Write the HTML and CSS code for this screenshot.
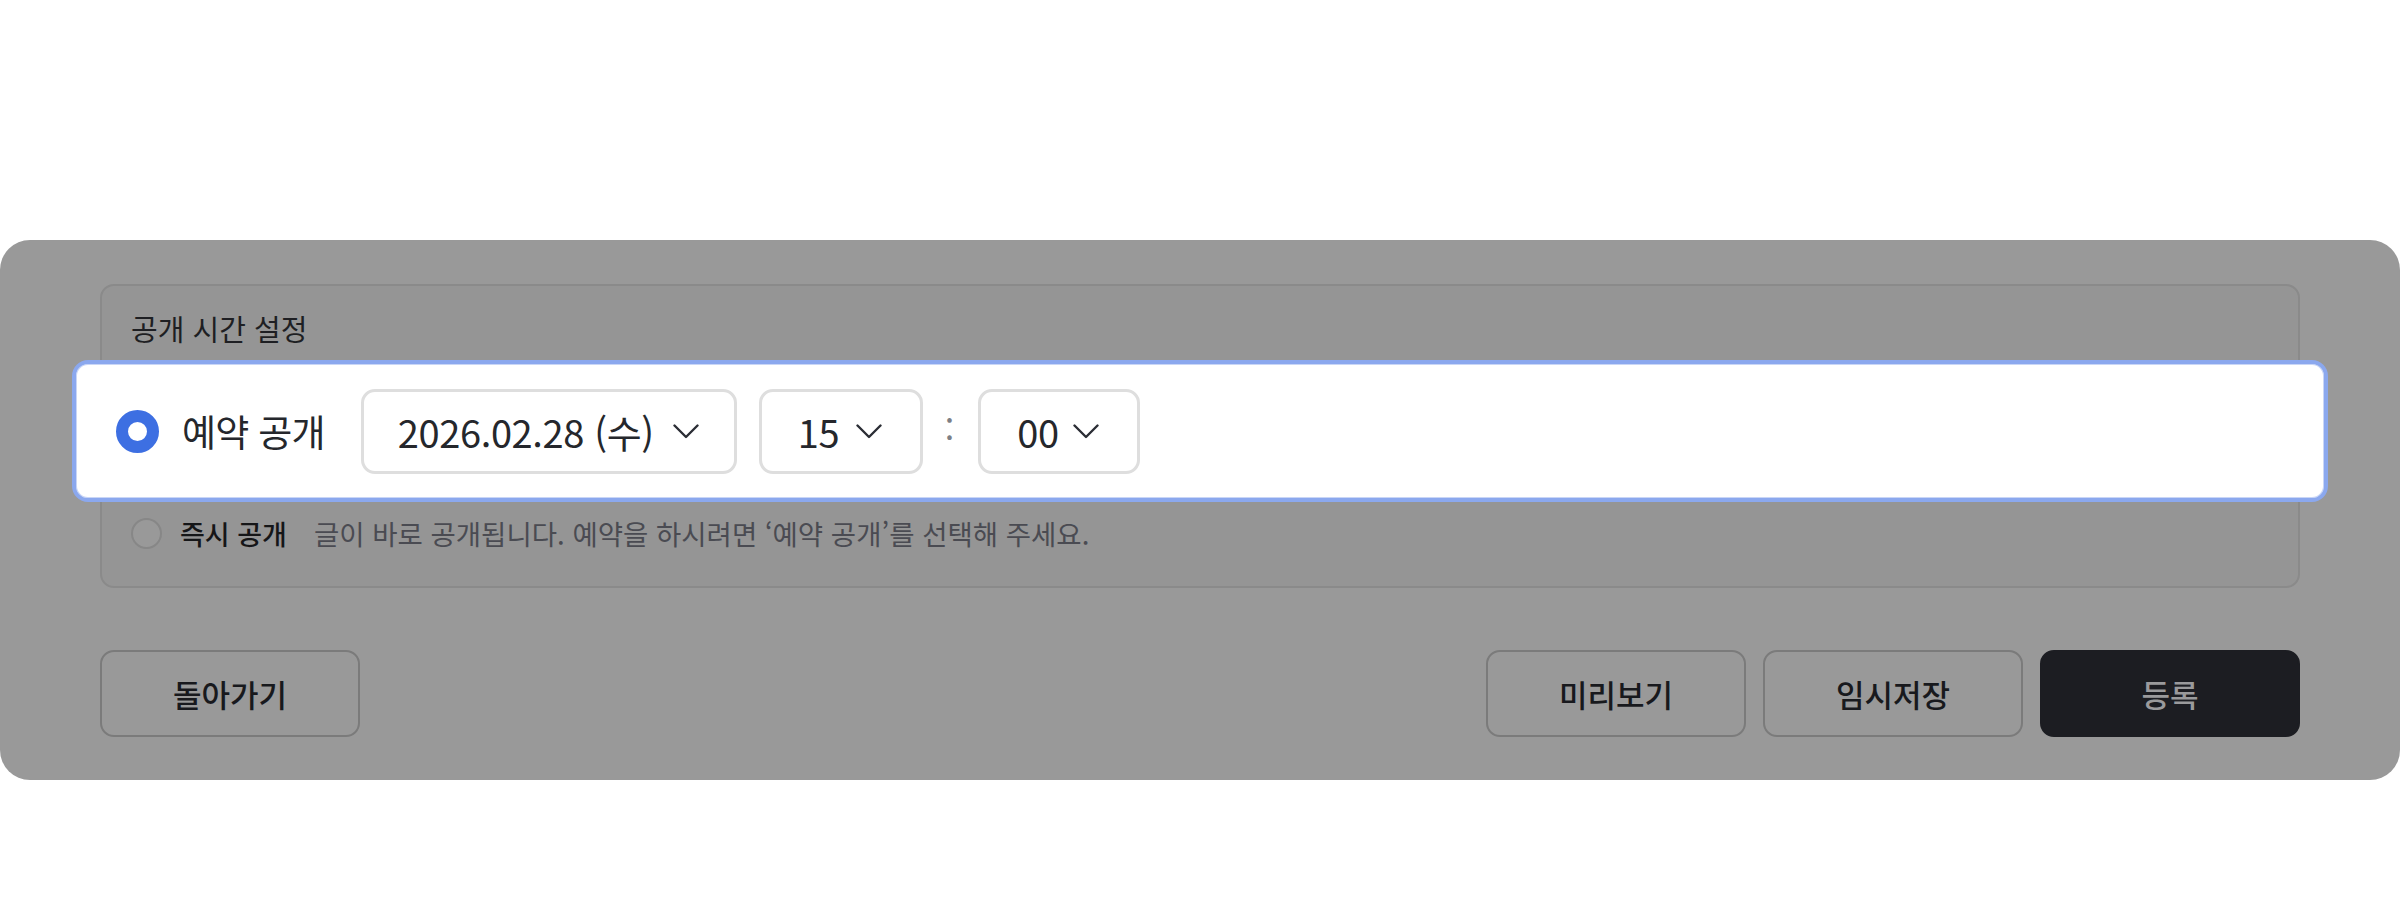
FILE: index.html
```html
<!DOCTYPE html>
<html lang="ko">
<head>
<meta charset="utf-8">
<title>공개 시간 설정</title>
<link rel="stylesheet" href="styles.css">
</head>
<body>
<div class="panel">
  <section class="fieldset">
    <h2 class="title">공개 시간 설정</h2>
    <div class="spot">
      <span class="radio radio-on"></span>
      <span class="spot-label">예약 공개</span>
      <div class="select select-date">
        <span class="select-value">2026.02.28 (수)</span>
        <svg class="chev" width="26" height="15" viewBox="0 0 26 15"><polyline points="1.5,1.5 13,13 24.5,1.5" fill="none" stroke="#2b2e35" stroke-width="2.4" stroke-linecap="round" stroke-linejoin="round"/></svg>
      </div>
      <div class="select select-time">
        <span class="select-value">15</span>
        <svg class="chev" width="26" height="15" viewBox="0 0 26 15"><polyline points="1.5,1.5 13,13 24.5,1.5" fill="none" stroke="#2b2e35" stroke-width="2.4" stroke-linecap="round" stroke-linejoin="round"/></svg>
      </div>
      <span class="colon">:</span>
      <div class="select select-time select-min">
        <span class="select-value">00</span>
        <svg class="chev" width="26" height="15" viewBox="0 0 26 15"><polyline points="1.5,1.5 13,13 24.5,1.5" fill="none" stroke="#2b2e35" stroke-width="2.4" stroke-linecap="round" stroke-linejoin="round"/></svg>
      </div>
    </div>
    <div class="row">
      <span class="radio radio-off"></span>
      <span class="row-label">즉시 공개</span>
      <span class="row-desc">글이 바로 공개됩니다. 예약을 하시려면 ‘예약 공개’를 선택해 주세요.</span>
    </div>
  </section>
  <div class="actions">
    <button class="btn">돌아가기</button>
    <div class="actions-right">
      <button class="btn">미리보기</button>
      <button class="btn">임시저장</button>
      <button class="btn btn-primary">등록</button>
    </div>
  </div>
</div>
</body>
</html>
```

FILE: styles.css
```css
* { box-sizing: border-box; }
html, body { margin: 0; padding: 0; background: #ffffff; }
body {
  font-family: "Noto Sans CJK KR", "Noto Sans", sans-serif;
  width: 2400px;
  height: 900px;
  overflow: hidden;
}
.panel {
  margin-top: 240px;
  height: 540px;
  background: #999999;
  border-radius: 30px;
  padding: 44px 100px 0 100px;
}
.fieldset {
  border: 2px solid #8a8a8a;
  background: #959595;
  border-radius: 14px;
  padding: 22px 29px 0 29px;
  height: 304px;
}
.title {
  margin: 0;
  font-size: 29px;
  font-weight: 400;
  line-height: 40px;
  color: #1e1f23;
  letter-spacing: 0;
}
.spot {
  margin: 12px -59px 0 -59px;
  height: 142px;
  background: #ffffff;
  border: 4px solid #8ba8ee;
  border-radius: 16px;
  box-shadow: inset 0 0 0 1px #c9d6f6;
  display: flex;
  align-items: center;
  padding-left: 40px;
}
.radio {
  display: inline-block;
  border-radius: 50%;
  flex: none;
}
.radio-on {
  width: 43px;
  height: 43px;
  border: 12.5px solid #3d6fe2;
  background: #ffffff;
}
.spot-label {
  margin-left: 23px;
  font-size: 37px;
  color: #25272c;
  letter-spacing: -0.02em;
}
.select {
  height: 85px;
  border: 3px solid #dedede;
  border-radius: 14px;
  display: flex;
  align-items: center;
  justify-content: space-between;
  background: #ffffff;
}
.select-date {
  margin-left: 36px;
  width: 376px;
  padding: 0 35px 0 34px;
}
.select-time {
  width: 164px;
  padding: 0 38px 0 36px;
  margin-left: 22px;
}
.select-min { margin-left: 0; width: 162px; }
.select-value {
  font-size: 38px;
  color: #25272c;
  letter-spacing: -0.01em;
}
.chev { display: block; flex: none; }
.colon {
  font-size: 34px;
  color: #7d7f86;
  margin: -6px 24px 0 22px;
}
.row {
  margin-top: 11px;
  height: 40px;
  display: flex;
  align-items: center;
}
.radio-off {
  width: 31px;
  height: 31px;
  border: 2px solid #878787;
  background: #999999;
}
.row-label {
  margin-left: 18px;
  font-size: 27px;
  font-weight: 500;
  color: #151618;
  letter-spacing: 0;
}
.row-desc {
  margin-left: 27px;
  font-size: 27.5px;
  color: #4a4b52;
  letter-spacing: 0;
}
.actions {
  margin-top: 62px;
  display: flex;
  justify-content: space-between;
}
.actions-right {
  display: flex;
  gap: 17px;
}
.btn {
  width: 260px;
  height: 87px;
  border: 2px solid #7b7b7b;
  border-radius: 14px;
  background: #999999;
  font-family: "Noto Sans CJK KR", "Noto Sans", sans-serif;
  font-size: 31px;
  font-weight: 500;
  color: #18191d;
  letter-spacing: 0;
  padding: 0;
}
.btn-primary {
  background: #1c1d22;
  border-color: #1c1d22;
  color: #9a9a9c;
}
```
